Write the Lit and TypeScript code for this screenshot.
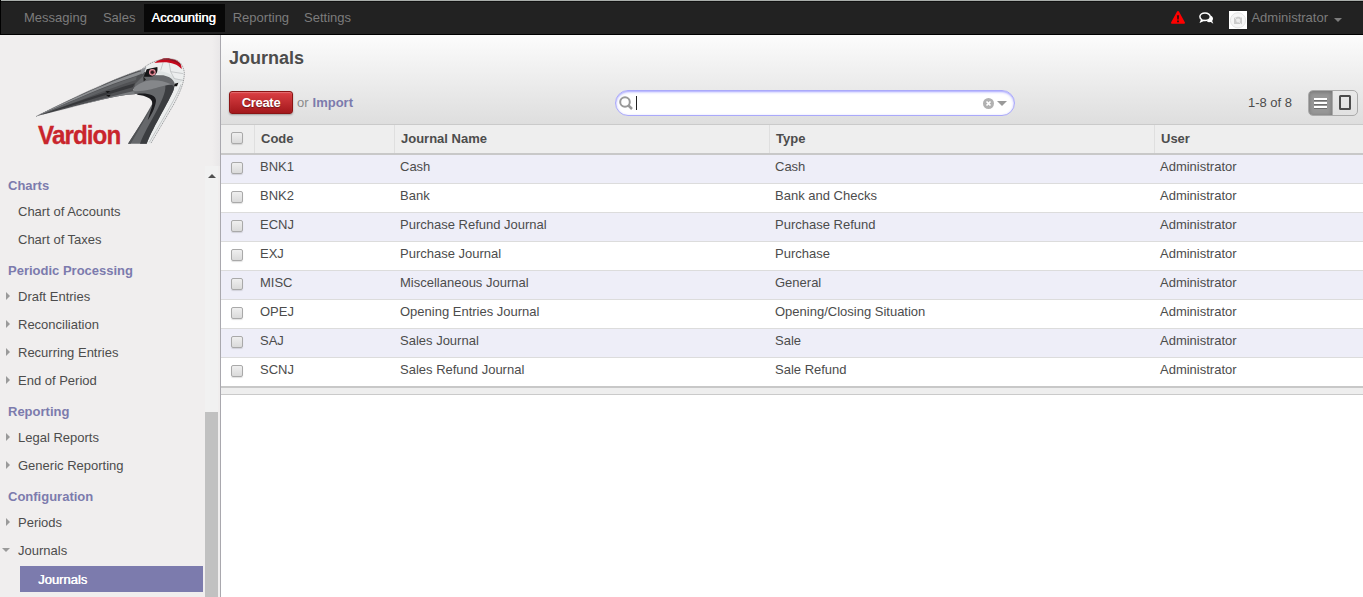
import { LitElement, html, css, svg, nothing } from "lit";
import { customElement } from "lit/decorators.js";
import { classMap } from "lit/directives/class-map.js";

interface MenuItem { label: string; state?: "closed" | "open" | "active"; }
interface MenuSection { title: string; items: MenuItem[]; }

const NAV = ["Messaging", "Sales", "Accounting", "Reporting", "Settings"];

const MENU: MenuSection[] = [
  { title: "Charts", items: [{ label: "Chart of Accounts" }, { label: "Chart of Taxes" }] },
  { title: "Periodic Processing", items: [
    { label: "Draft Entries", state: "closed" },
    { label: "Reconciliation", state: "closed" },
    { label: "Recurring Entries", state: "closed" },
    { label: "End of Period", state: "closed" },
  ] },
  { title: "Reporting", items: [
    { label: "Legal Reports", state: "closed" },
    { label: "Generic Reporting", state: "closed" },
  ] },
  { title: "Configuration", items: [
    { label: "Periods", state: "closed" },
    { label: "Journals", state: "open" },
    { label: "Journals", state: "active" },
  ] },
];

const ROWS = [
  ["BNK1", "Cash", "Cash"],
  ["BNK2", "Bank", "Bank and Checks"],
  ["ECNJ", "Purchase Refund Journal", "Purchase Refund"],
  ["EXJ", "Purchase Journal", "Purchase"],
  ["MISC", "Miscellaneous Journal", "General"],
  ["OPEJ", "Opening Entries Journal", "Opening/Closing Situation"],
  ["SAJ", "Sales Journal", "Sale"],
  ["SCNJ", "Sales Refund Journal", "Sale Refund"],
];

@customElement("top-bar")
class TopBar extends LitElement {
  static styles = css`
    :host { display: flex; box-sizing: border-box; height: 35px; background: #222; border: 1px solid #000;
      border-top: 0; border-right: 0; box-shadow: inset 0 1px #a9aeab, inset 0 2px #111; color: #7c7c7c; padding: 4px 0 0 15px; }
    .tab { box-sizing: border-box; height: 28px; line-height: 27px; padding: 0 8px; white-space: nowrap; }
    .tab:nth-child(2) { padding-right: 9px; }
    .tab:nth-child(4) { padding-right: 7px; }
    .tab.on { background: #080808; color: #fff; text-shadow: 0.4px 0 #fff; padding: 0 9px 0 7px; }
    .right { margin-left: auto; display: flex; height: 28px; }
    .warn { margin: 7px 14px 0 0; width: 14px; height: 13px; }
    .chat { margin: 8px 15px 0 0; width: 15px; height: 12px; }
    .avatar { margin: 7px 4px 0 0; width: 18px; height: 18px; background: #fff; }
    .name { line-height: 27px; }
    .caret { margin: 14px 21px 0 6px; width: 0; height: 0; border: 4px solid transparent; border-top-color: #7c7c7c; border-bottom: 0; }
    svg { display: block; }
  `;
  render() {
    return html`
      ${NAV.map((n) => html`<span class=${classMap({ tab: true, on: n === "Accounting" })}>${n}</span>`)}
      <div class="right">
        <svg class="warn" viewBox="0 0 14 13"><path d="M7 0Q7.7 0 8.1.8L13.8 11.3Q14.4 12.6 13 12.8H1Q-.4 12.6.2 11.3L5.900 .8Q6.300 0 7 0Z" fill="#f00"/><path d="M5.900 4.200H8.100L7.800 8.500H6.200ZM6 9.500H8V11.300H6Z" fill="#401010"/></svg>
        <svg class="chat" viewBox="0 0 15 12"><path d="M10 10.200C12 10.200 14 8.900 14 6.800 14 5.500 13.200 4.400 12 3.800L8 9.800ZM11 9.500L14.300 11.700 13 8.500Z" fill="#fff"/><path d="M6 1C3 1 .9 2.700.9 4.700.9 5.900 1.700 7 2.800 7.600L1.900 9.500 4.800 8.300Q5.400 8.400 6 8.400C9 8.400 11.300 6.800 11.300 4.700 11.300 2.700 9 1 6 1Z" fill="#222" stroke="#fff" stroke-width="1.500"/></svg>
        <svg class="avatar" viewBox="0 0 18 18"><circle cx="9" cy="9.300" r="7.600" fill="#f6f6f6" stroke="#dedede" stroke-width=".8"/><path d="M5 6.500H7L8 5.700H10.500L11.300 6.500H13V13H5Z" fill="#ccc"/><circle cx="9.200" cy="9.600" r="2" fill="#eee"/><path d="M4 5L13 14" stroke="#eee" stroke-width=".8"/></svg>
        <span class="name">Administrator</span><i class="caret"></i>
      </div>`;
  }
}

@customElement("brand-logo")
class BrandLogo extends LitElement {
  static styles = css`
    :host { display: block; }
    svg { display: block; width: 200px; height: 110px; }
    .word { font: bold 79px "Liberation Sans", Arial, sans-serif; letter-spacing: -3px; }
  `;
  render() {
    return html`<svg viewBox="0 0 600 330">${svg`
      <path d="M364 74C390 51 420 42 452 42C477 44 490 62 493 84C493 116 479 146 460 180C438 218 413 259 392 296H376L448 150L434 100Z" fill="#eceeee"/>
      <path d="M384 80C416 74 450 80 464 100L491 105L470 119L462 128L447 98L428 91Z" fill="#dfe3e3"/>
      <path d="M452 80L463 101L490 106M430 50L422 76M447 51L452 80L490 86M447 98L466 117" fill="none" stroke="#b4b7b8" stroke-width="2"/>
      <path d="M483 118C474 146 448 190 388 292" fill="none" stroke="#c3c6c7" stroke-width="3"/>
      <path d="M48 214C140 167 285 99 364 74L383 86L362 111L340 133L345 148C290 149 180 181 48 214Z" fill="#505154"/>
      <path d="M52 211C150 165 282 103 368 77L370 84L348 93C260 120 160 166 78 202Z" fill="#8d8f92"/>
      <path d="M80 201C170 162 265 122 350 94L348 105C260 132 170 172 80 204Z" fill="#606265"/>
      <path d="M65 209C170 169 265 139 345 115L338 127C265 147 170 178 65 209Z" fill="#36373a"/>
      <path d="M78 208C170 183 270 154 341 138L344 147C270 153 180 182 78 208Z" fill="#7b7d80"/>
      <path d="M340 139L346 116L372 90L430 91C458 97 470 112 461 134C447 170 402 240 380 296H324C352 254 382 204 396 178C404 158 380 149 345 147Z" fill="#66686b"/>
      <path d="M342 128C370 102 410 98 457 119C423 119 400 138 340 139Z" fill="#85878a"/>
      <path d="M436 122C452 116 466 118 461 134C447 170 402 240 380 296H360C380 241 440 160 436 122Z" fill="#3b3d40"/>
      <path d="M352 146C380 143 409 148 408 168C405 190 394 210 383 226C388 206 396 190 397 176C398 160 378 152 352 149Z" fill="#1b1b1e"/>
      <path d="M394 186C384 208 352 262 332 296H324C350 256 378 212 394 186Z" fill="#505255"/>
      <path d="M371 95L380 73L412 66C415 83 406 94 392 95Z" fill="#151517"/>
      <circle cx="397" cy="82" r="10" fill="#e99aa4"/><circle cx="397" cy="82" r="6" fill="#30171d" stroke="#b75767" stroke-width="2"/>
      <path d="M370 94L378 104L371 109Z" fill="#222"/><path d="M361 75L379 65L375 78L368 88Z" fill="#909398"/>
      <path d="M403 54C418 42 435 38 451 41C472 43 486 54 485 72C468 53 442 48 403 54Z" fill="#c5081b"/>
      <path d="M425 42C447 38 472 44 484 62C468 48 445 43 425 45Z" fill="#851321"/>
      <path d="M256 139L271 138L263 144ZM258 151L272 149L267 156ZM464 116L475 113L471 124L462 124Z" fill="#111"/>
      <path d="M48 215C140 167 285 99 364 74C392 49 424 40 453 42C481 43 490 63 493 83C493 114 479 144 460 180L392 296" fill="none" stroke="#77797c" stroke-width="2" stroke-dasharray="4 2"/>
      <text class="word" x="54" y="296" textLength="247" lengthAdjust="spacingAndGlyphs" fill="#c9252c" stroke="#c9252c" stroke-width="1">Vardion</text>`}
    </svg>`;
  }
}

@customElement("side-menu")
class SideMenu extends LitElement {
  static styles = css`
    :host { display: flex; flex-direction: column; width: 220px; flex: none; background: #f0eeee; border-right: 1px solid #a9a8ae; box-sizing: content-box; overflow: hidden;
      background-image: linear-gradient(to right, transparent 212px, #e9e7e8 220px); }
    brand-logo { margin: 10px 0 0 20px; height: 110px; flex: none; }
    .scroll { display: flex; flex: 1; min-height: 0; margin-top: 11px; background: #f0eeee; }
    .menu { width: 203px; overflow: hidden; padding-top: 2px; box-sizing: border-box; }
    .title { color: #7c7bad; font-weight: bold; box-sizing: border-box; height: 29px; line-height: 23px; padding: 6px 0 0 8px; }
    .item { display: flex; align-items: center; height: 28px; color: #4c4c4c; }
    .item .mark { width: 18px; box-sizing: border-box; padding-left: 6px; }
    .closed .mark i { display: block; width: 0; border: 4px solid transparent; border-left-color: #9a9a9a; border-right: 0; }
    .open .mark { padding-left: 2px; }
    .open .mark i { display: block; width: 0; border: 4px solid transparent; border-top-color: #9a9a9a; border-bottom: 0; }
    .active { height: 26px; margin: 2px 0 0 20px; background: #7c7bad; color: #fff; text-shadow: 0.4px 0 #fff; }
    .bar { margin-left: 2px; width: 13px; background: #f1f1f1; display: flex; flex-direction: column; align-items: center; }
    .up { width: 0; border: 4px solid transparent; border-bottom-color: #505050; border-top: 0; margin: 8px 0 0 0; }
    .thumb { margin-top: 234px; width: 13px; flex: 1; background: #c1c1c1; }
  `;
  render() {
    return html`<brand-logo></brand-logo>
      <div class="scroll">
        <div class="menu">${MENU.map((s) => html`<div class="section">
          <div class="title">${s.title}</div>
          ${s.items.map((i) => html`<div class=${"item " + (i.state ?? "")}><span class="mark">${i.state && i.state !== "active" ? html`<i></i>` : nothing}</span>${i.label}</div>`)}
        </div>`)}</div>
        <div class="bar"><i class="up"></i><div class="thumb"></div></div>
      </div>`;
  }
}

@customElement("journal-view")
class JournalView extends LitElement {
  static styles = css`
    :host { display: flex; flex-direction: column; flex: 1; min-width: 0; background: #fff; }
    .head { height: 90px; box-sizing: border-box; border-bottom: 1px solid #cacaca; background: linear-gradient(#fcfcfc, #dedede); padding: 11px 5px 0 8px; }
    .h { margin: 0; font-size: 18px; font-weight: bold; line-height: 24px; height: 44px; }
    .tools { display: grid; grid-template-columns: 386px 400px 1fr; }
    .left { display: flex; align-items: center; height: 25px; color: #8a8a8a; }
    .create { width: 64px; height: 23px; box-sizing: border-box; border: 1px solid #8a1414; border-radius: 3px; background: linear-gradient(#dc4044, #a3181c); color: #fff; font-weight: bold; letter-spacing: -0.3px; text-align: center; line-height: 21px; text-shadow: 0 1px 1px rgba(0,0,0,.4); box-shadow: 0 1px 2px rgba(0,0,0,.3), inset 0 1px 1px rgba(255,255,255,.25); margin-right: 4px; }
    .import { color: #7c7bad; margin-left: 4px; }
    .search { box-sizing: border-box; height: 26px; border: 1px solid #aaa9fa; border-radius: 13px; background: #fff; box-shadow: inset 0 1px 3px #b6b5ff, inset 0 1px 1px #c8c7ff; display: flex; align-items: center; padding: 0 7px 0 3px; }
    .lens { width: 14px; height: 14px; }
    .cursor { width: 1px; height: 14px; margin-left: 3px; background: #222; }
    .clear { width: 11px; height: 11px; margin-left: auto; }
    .drop { width: 0; margin-left: 3px; border: 5px solid transparent; border-top-color: #999; border-bottom: 0; }
    .right { display: flex; justify-content: flex-end; align-items: center; height: 26px; }
    .count { padding-bottom: 2px; }
    .modes { display: flex; margin-left: 16px; box-sizing: border-box; width: 50px; height: 26px; border: 1px solid #aaa; border-radius: 5px; overflow: hidden; }
    .mode { width: 24px; height: 24px; }
    .mode.on { background: #979797; box-shadow: inset 0 1px 4px rgba(0,0,0,.25); border-right: 1px solid #aaa; width: 23px; }
    .row { display: grid; grid-template-columns: 33px 140px 375px 385px 1fr; height: 28px; border-bottom: 1px solid #dcdcdc; line-height: 23px; }
    .row.odd { background: #eeeef8; }
    .row.last { border-bottom: 2px solid #c8c8c8; }
    .cell { padding-left: 6px; white-space: nowrap; }
    .row.th { background: #eee; border-bottom: 2px solid #c8c8c8; font-weight: bold; line-height: 27px; }
    .th .cell { border-left: 1px solid #dfdfdf; }
    .check { box-sizing: border-box; width: 12px; height: 12px; margin: 7px 0 0 10px; border: 1px solid #a9a9a9; border-radius: 2px; background: linear-gradient(#efefef, #dadada); box-shadow: 0 1px 1px rgba(0,0,0,.12); }
    .foot { height: 6px; background: #eee; border-bottom: 1px solid #cacaca; }
    svg { display: block; }
  `;
  render() {
    return html`
      <div class="head">
        <h1 class="h">Journals</h1>
        <div class="tools">
          <div class="left"><span class="create">Create</span>or<b class="import">Import</b></div>
          <div class="search">
            <svg class="lens" viewBox="0 0 14 14" fill="none" stroke="#999" stroke-width="2"><circle cx="6" cy="6" r="4.800"/><path d="M9.500 9.500L13 13" stroke-width="2.500"/></svg>
            <i class="cursor"></i>
            <svg class="clear" viewBox="0 0 11 11"><circle cx="5.500" cy="5.500" r="5.500" fill="#b1b1b1"/><path d="M3.500 3.500L7.500 7.500M7.500 3.500L3.500 7.500" stroke="#fff" stroke-width="1.700"/></svg>
            <i class="drop"></i>
          </div>
          <div class="right"><span class="count">1-8 of 8</span>
            <div class="modes">
              <svg class="mode on" viewBox="0 0 23 24"><path d="M5 9.500H18M5 13.500H18M5 17.500H18" stroke="#6d6d6d" stroke-width="1"/><path d="M5 8H18M5 12H18M5 16H18" stroke="#fff" stroke-width="2"/></svg>
              <svg class="mode" viewBox="0 0 24 24"><rect x="7" y="5" width="10" height="13" rx=".5" fill="none" stroke="#4c4c4c" stroke-width="2"/></svg>
            </div>
          </div>
        </div>
      </div>
      <div class="row th"><i class="check"></i>${["Code", "Journal Name", "Type", "User"].map((t) => html`<div class="cell">${t}</div>`)}</div>
      ${ROWS.map((r, i) => html`<div class=${classMap({ row: true, odd: i % 2 === 0, last: i === ROWS.length - 1 })}>
        <i class="check"></i>${[...r, "Administrator"].map((c) => html`<div class="cell">${c}</div>`)}</div>`)}
      <div class="foot"></div>`;
  }
}

@customElement("app-root")
class AppRoot extends LitElement {
  static styles = css`
    :host { display: flex; flex-direction: column; width: 100%; height: 597px; overflow: hidden; color: #4c4c4c; font: 13px "Liberation Sans", Arial, sans-serif; background: #fff; }
    .body { display: flex; flex: 1; min-height: 0; }
  `;
  render() {
    return html`<top-bar></top-bar><div class="body"><side-menu></side-menu><journal-view></journal-view></div>`;
  }
}
